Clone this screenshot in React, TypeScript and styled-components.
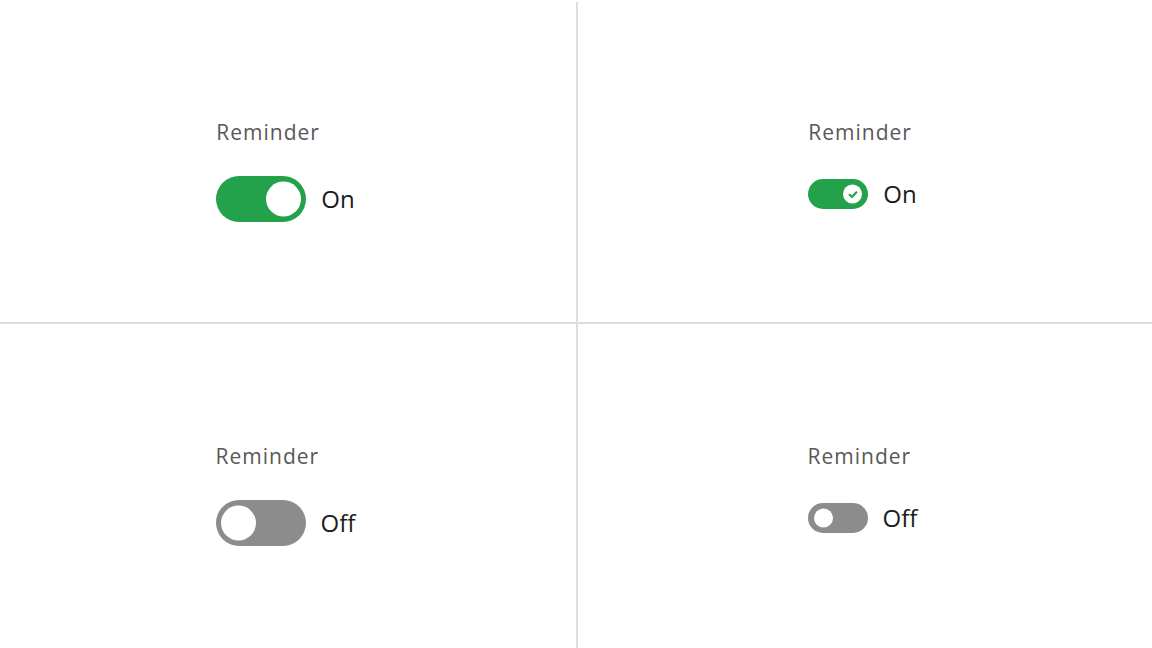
import React from "react";
import styled, { createGlobalStyle } from "styled-components";

const Global = createGlobalStyle`
  html, body { margin: 0; padding: 0; background: #ffffff; }
  body { font-family: "Open Sans", "Noto Sans", Arial, sans-serif; }
`;

const Page = styled.div`
  width: 1152px;
  height: 648px;
  padding-top: 2px;
  box-sizing: border-box;
  background: #ffffff;
  overflow: hidden;
`;

const Grid = styled.div`
  display: grid;
  grid-template-columns: 576px 574px;
  grid-template-rows: 320px 324px;
  column-gap: 2px;
  row-gap: 2px;
  background: #dedede;
`;

const Cell = styled.div<{ $top: number }>`
  background: #ffffff;
  display: flex;
  justify-content: center;
  align-items: flex-start;
  padding-top: ${(p) => p.$top}px;
  box-sizing: border-box;
`;

const Field = styled.div`
  display: flex;
  flex-direction: column;
  align-items: flex-start;
  margin-right: 5px;
`;

const Label = styled.div`
  font-size: 21px;
  line-height: 24px;
  color: #585858;
  letter-spacing: 1px;
`;

const Row = styled.div<{ $mt: number }>`
  display: flex;
  align-items: center;
  gap: 15px;
  margin-top: ${(p) => p.$mt}px;
`;

const Track = styled.div<{ $on: boolean; $size: "lg" | "sm" }>`
  position: relative;
  width: ${(p) => (p.$size === "lg" ? 90 : 60)}px;
  height: ${(p) => (p.$size === "lg" ? 46 : 30)}px;
  border-radius: 999px;
  background: ${(p) => (p.$on ? "#23a24b" : "#8c8c8c")};
  flex-shrink: 0;
`;

const Thumb = styled.div<{ $on: boolean; $size: "lg" | "sm" }>`
  position: absolute;
  top: 50%;
  transform: translateY(-50%);
  width: ${(p) => (p.$size === "lg" ? 35 : 19)}px;
  height: ${(p) => (p.$size === "lg" ? 35 : 19)}px;
  border-radius: 50%;
  background: #ffffff;
  ${(p) => (p.$on ? "right" : "left")}: ${(p) => (p.$size === "lg" ? 5 : 6)}px;
  display: flex;
  align-items: center;
  justify-content: center;
`;

const State = styled.span`
  font-size: 24px;
  line-height: 28px;
  color: #1c1c1c;
`;

const Check = () => (
  <svg width="12" height="12" viewBox="0 0 12 12" fill="none">
    <path d="M2.6 6.3 L5 8.5 L9.4 3.8" stroke="#23a24b" strokeWidth="2.2" strokeLinecap="round" strokeLinejoin="round" />
  </svg>
);

type SwitchProps = { on: boolean; size: "lg" | "sm"; top: number };

const ReminderSwitch = ({ on, size, top }: SwitchProps) => (
  <Cell $top={top}>
    <Field>
      <Label>Reminder</Label>
      <Row $mt={size === "lg" ? 32 : 35}>
        <Track $on={on} $size={size} role="switch" aria-checked={on}>
          <Thumb $on={on} $size={size}>{on && size === "sm" ? <Check /> : null}</Thumb>
        </Track>
        <State>{on ? "On" : "Off"}</State>
      </Row>
    </Field>
  </Cell>
);

export default function App() {
  return (
    <>
      <Global />
      <Page>
        <Grid>
          <ReminderSwitch on size="lg" top={118} />
          <ReminderSwitch on size="sm" top={118} />
          <ReminderSwitch on={false} size="lg" top={120} />
          <ReminderSwitch on={false} size="sm" top={120} />
        </Grid>
      </Page>
    </>
  );
}
